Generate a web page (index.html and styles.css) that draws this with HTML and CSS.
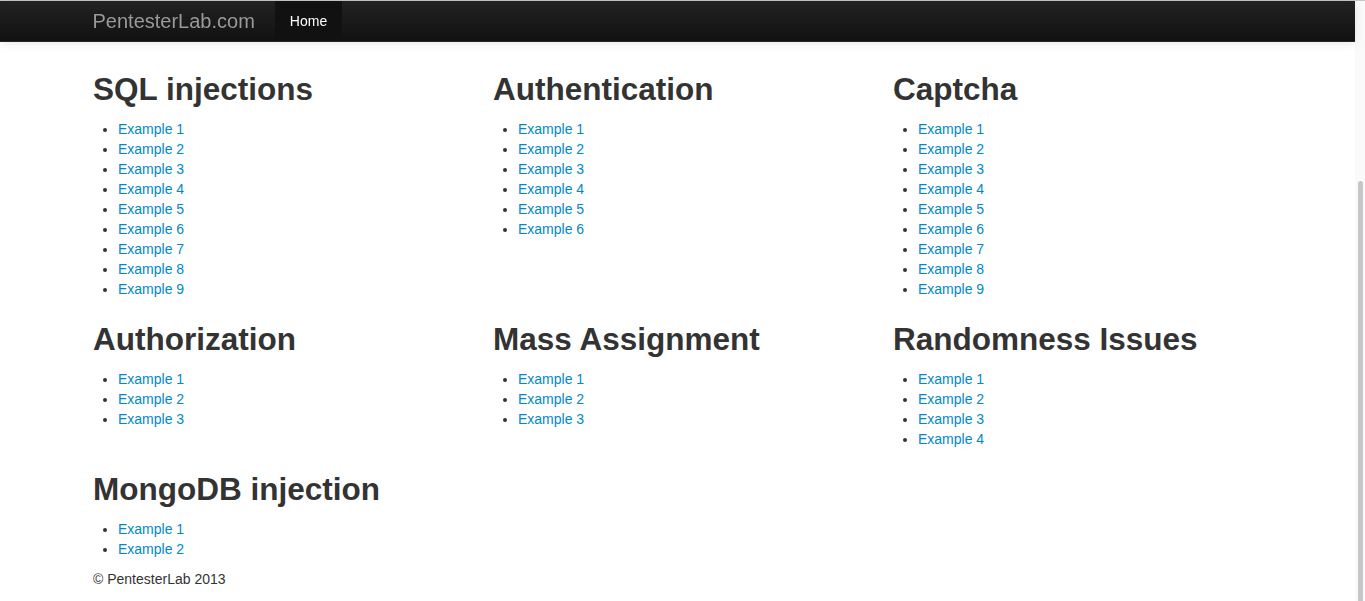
FILE: index.html
```html
<!DOCTYPE html>
<html>
<head>
    <title>PentesterLab.com</title>
    <link rel="stylesheet" href="styles.css">
</head>
<body>
    <div class="navbar">
        <div class="navbar-inner">
            <div class="container nav-row">
                <a class="brand" href="#">PentesterLab.com</a>
                <ul class="nav">
                    <li class="active"><a href="#">Home</a></li>
                </ul>
            </div>
        </div>
    </div>

    <div class="container content">
        <div class="sections">
            <div class="section">
                <h2>SQL injections</h2>
                <ul>
                    <li><a href="#">Example 1</a></li>
                    <li><a href="#">Example 2</a></li>
                    <li><a href="#">Example 3</a></li>
                    <li><a href="#">Example 4</a></li>
                    <li><a href="#">Example 5</a></li>
                    <li><a href="#">Example 6</a></li>
                    <li><a href="#">Example 7</a></li>
                    <li><a href="#">Example 8</a></li>
                    <li><a href="#">Example 9</a></li>
                </ul>
            </div>
            <div class="section">
                <h2>Authentication</h2>
                <ul>
                    <li><a href="#">Example 1</a></li>
                    <li><a href="#">Example 2</a></li>
                    <li><a href="#">Example 3</a></li>
                    <li><a href="#">Example 4</a></li>
                    <li><a href="#">Example 5</a></li>
                    <li><a href="#">Example 6</a></li>
                </ul>
            </div>
            <div class="section">
                <h2>Captcha</h2>
                <ul>
                    <li><a href="#">Example 1</a></li>
                    <li><a href="#">Example 2</a></li>
                    <li><a href="#">Example 3</a></li>
                    <li><a href="#">Example 4</a></li>
                    <li><a href="#">Example 5</a></li>
                    <li><a href="#">Example 6</a></li>
                    <li><a href="#">Example 7</a></li>
                    <li><a href="#">Example 8</a></li>
                    <li><a href="#">Example 9</a></li>
                </ul>
            </div>
            <div class="section">
                <h2>Authorization</h2>
                <ul>
                    <li><a href="#">Example 1</a></li>
                    <li><a href="#">Example 2</a></li>
                    <li><a href="#">Example 3</a></li>
                </ul>
            </div>
            <div class="section">
                <h2>Mass Assignment</h2>
                <ul>
                    <li><a href="#">Example 1</a></li>
                    <li><a href="#">Example 2</a></li>
                    <li><a href="#">Example 3</a></li>
                </ul>
            </div>
            <div class="section">
                <h2>Randomness Issues</h2>
                <ul>
                    <li><a href="#">Example 1</a></li>
                    <li><a href="#">Example 2</a></li>
                    <li><a href="#">Example 3</a></li>
                    <li><a href="#">Example 4</a></li>
                </ul>
            </div>
            <div class="section">
                <h2>MongoDB injection</h2>
                <ul>
                    <li><a href="#">Example 1</a></li>
                    <li><a href="#">Example 2</a></li>
                </ul>
            </div>
        </div>

        <footer>
            <p>&copy; PentesterLab 2013</p>
        </footer>
    </div>

    <div class="scrollbar"><div class="thumb"></div></div>
</body>
</html>
```

FILE: styles.css
```css
html {
    border-top: 1px solid #c5c8cd;
}

body {
    margin: 0 9px 0 0;
    padding-top: 58px;
    font-family: "Liberation Sans", Arial, sans-serif;
    font-size: 14px;
    line-height: 20px;
    color: #333;
    background-color: #fff;
}

a {
    color: #0088cc;
    text-decoration: none;
}

.container {
    width: 1170px;
    margin: 0 auto;
}

/* top bar */
.navbar {
    position: fixed;
    top: 1px;
    left: 0;
    right: 10px;
    z-index: 10;
}

.navbar-inner {
    height: 40px;
    background-color: #1b1b1b;
    background-image: linear-gradient(to bottom, #222222, #111111);
    border-bottom: 1px solid #252525;
    box-shadow: 0 1px 10px rgba(0, 0, 0, 0.1);
}

.nav-row {
    display: flex;
    align-items: stretch;
    height: 40px;
}

.brand {
    margin-left: -20px;
    padding: 10px 20px;
    font-size: 20px;
    font-weight: 200;
    color: #999;
}

.nav {
    display: flex;
    margin: 0 10px 0 0;
    padding: 0;
    list-style: none;
}

.nav li a {
    display: block;
    padding: 10px 15px;
    color: #999;
}

.nav li.active a {
    color: #fff;
    background-color: #111;
}

/* example lists */
.sections {
    display: grid;
    grid-template-columns: repeat(3, 370px);
    column-gap: 30px;
}

h2 {
    margin: 10px 0;
    font-size: 31.5px;
    line-height: 40px;
    font-weight: bold;
    color: #333;
}

.section ul {
    margin: 0 0 10px 25px;
    padding: 0;
}

footer p {
    margin: 0 0 10px;
}

.scrollbar {
    position: fixed;
    top: 1px;
    right: 0;
    bottom: 0;
    width: 10px;
    background-color: #fafafa;
}

.thumb {
    margin: 180px 2px 0 3px;
    height: 440px;
    border-radius: 3px;
    background-color: #c6c6ca;
}
```
